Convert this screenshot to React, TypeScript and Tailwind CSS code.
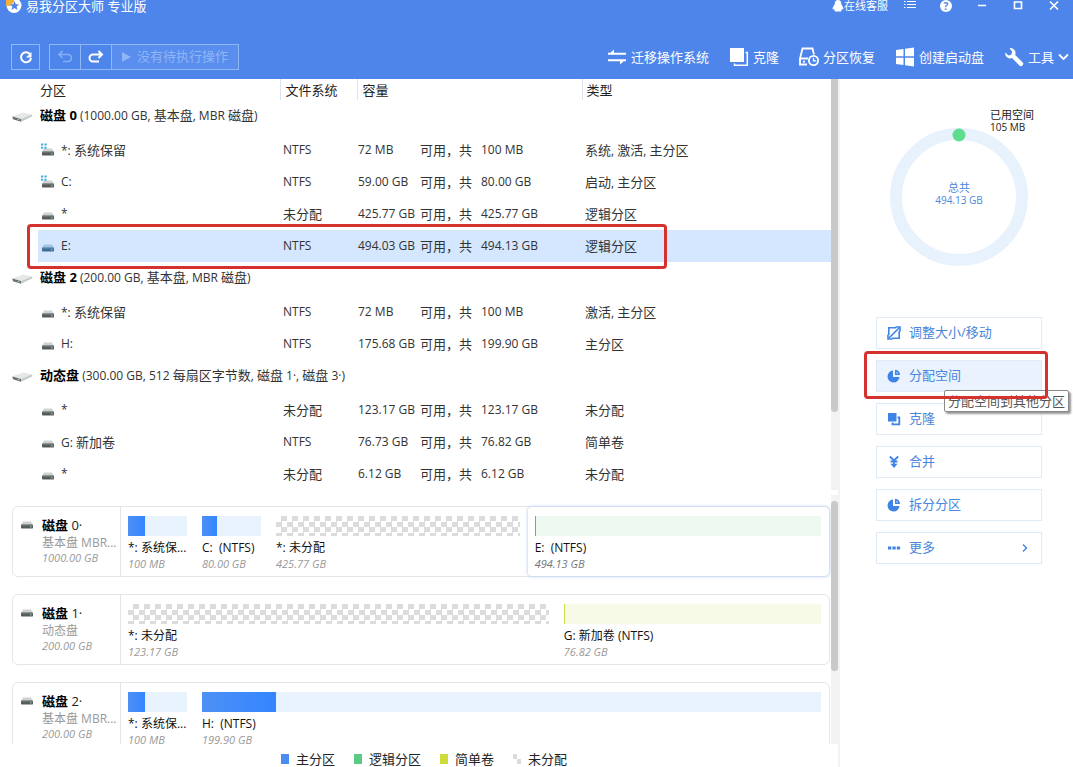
import { Fragment, type ReactNode } from "react";
import clsx from "clsx";

type Partition = {
  name: string;
  fs: string;
  free: string;
  total: string;
  type: string;
  system?: boolean;
  selected?: boolean;
};

type Group = { title: string; detail: string; partitions: Partition[] };

const GROUPS: Group[] = [
  {
    title: "磁盘 0",
    detail: "(1000.00 GB, 基本盘, MBR 磁盘)",
    partitions: [
      { name: "*: 系统保留", fs: "NTFS", free: "72 MB", total: "100 MB", type: "系统, 激活, 主分区", system: true },
      { name: "C:", fs: "NTFS", free: "59.00 GB", total: "80.00 GB", type: "启动, 主分区", system: true },
      { name: "*", fs: "未分配", free: "425.77 GB", total: "425.77 GB", type: "逻辑分区" },
      { name: "E:", fs: "NTFS", free: "494.03 GB", total: "494.13 GB", type: "逻辑分区", selected: true },
    ],
  },
  {
    title: "磁盘 2",
    detail: "(200.00 GB, 基本盘, MBR 磁盘)",
    partitions: [
      { name: "*: 系统保留", fs: "NTFS", free: "72 MB", total: "100 MB", type: "激活, 主分区" },
      { name: "H:", fs: "NTFS", free: "175.68 GB", total: "199.90 GB", type: "主分区" },
    ],
  },
  {
    title: "动态盘",
    detail: "(300.00 GB, 512 每扇区字节数, 磁盘 1·, 磁盘 3·)",
    partitions: [
      { name: "*", fs: "未分配", free: "123.17 GB", total: "123.17 GB", type: "未分配" },
      { name: "G: 新加卷", fs: "NTFS", free: "76.73 GB", total: "76.82 GB", type: "简单卷" },
      { name: "*", fs: "未分配", free: "6.12 GB", total: "6.12 GB", type: "未分配" },
    ],
  },
];

type Kind = "primary" | "logical" | "simple" | "free";

// grow 0 is a partition too small to scale, drawn at the minimum width
type Segment = { label: string; size: string; kind: Kind; grow: number; used: number; selected?: boolean };

const DISKS: { title: string; sub: string; size: string; segments: Segment[] }[] = [
  {
    title: "0·",
    sub: "基本盘 MBR...",
    size: "1000.00 GB",
    segments: [
      { label: "*: 系统保...", size: "100 MB", kind: "primary", grow: 0, used: 28 },
      { label: "C:  (NTFS)", size: "80.00 GB", kind: "primary", grow: 0, used: 26 },
      { label: "*: 未分配", size: "425.77 GB", kind: "free", grow: 245, used: 0 },
      { label: "E:  (NTFS)", size: "494.13 GB", kind: "logical", grow: 288, used: 0, selected: true },
    ],
  },
  {
    title: "1·",
    sub: "动态盘",
    size: "200.00 GB",
    segments: [
      { label: "*: 未分配", size: "123.17 GB", kind: "free", grow: 422, used: 0 },
      { label: "G: 新加卷 (NTFS)", size: "76.82 GB", kind: "simple", grow: 258, used: 0 },
    ],
  },
  {
    title: "2·",
    sub: "基本盘 MBR...",
    size: "200.00 GB",
    segments: [
      { label: "*: 系统保...", size: "100 MB", kind: "primary", grow: 0, used: 28 },
      { label: "H:  (NTFS)", size: "199.90 GB", kind: "primary", grow: 1, used: 12 },
    ],
  },
];

const TRACK: Record<Kind, string> = {
  primary: "bg-[#e8f3fd]",
  logical: "bg-[#edf9f1]",
  simple: "bg-[#f7fae6]",
  free: "bg-[conic-gradient(#dcdcdc_25%,#fff_0_50%,#dcdcdc_0_75%,#fff_0)] bg-[length:11px_11px]",
};

const FILL: Record<Kind, string> = {
  primary: "bg-gradient-to-r from-[#4d90f5] to-[#3385ff]",
  logical: "bg-[#5cba80]",
  simple: "bg-[#d0dc4a]",
  free: "",
};

const LEGEND = [
  { label: "主分区", color: "bg-[#4a8cf0]" },
  { label: "逻辑分区", color: "bg-[#5bcb83]" },
  { label: "简单卷", color: "bg-[#cddc39]" },
  { label: "未分配", color: "bg-[conic-gradient(#fff_25%,#dcdcdc_0_50%,#fff_0_75%,#dcdcdc_0)]" },
];

// Han characters are set one size above the Latin text around them
function Mixed({ text }: { text: string }) {
  return (
    <>
      {text.split(/([\u4e00-\u9fff]+)/).map((part, i) =>
        i % 2 ? <span key={i} className="text-[13px]">{part}</span> : <Fragment key={i}>{part}</Fragment>
      )}
    </>
  );
}

function DriveIcon({ system, selected }: { system?: boolean; selected?: boolean }) {
  return (
    <svg width="14" height="14" viewBox="0 0 14 14" className="shrink-0">
      <path d="M3 5.500h8l2 3.500H1z" fill={selected ? "#a3c6e6" : "#cfd2d2"} />
      <rect x="1" y="8.500" width="12" height="4" rx="0.8" fill={selected ? "#3f6d94" : "#565c5c"} />
      <path d="M1.500 9h11" stroke={selected ? "#6d9cc4" : "#8c9292"} strokeWidth="0.800" />
      <rect x="10" y="10.300" width="1.500" height="1" fill="#a9cdb5" />
      {system && <path d="M0 .5h2.200v2H0zM3.400.5h2.200v2H3.400zM0 3.700h2.200v2H0zM3.400 3.700h2.200v2H3.400z" fill="#3fb0dc" />}
    </svg>
  );
}

function DiskIcon() {
  return (
    <svg width="20" height="12" viewBox="0 0 20 12" className="ml-3">
      <path d="M0 5.500L11 1.500l9 2-11 4.500z" fill="#e6e8e8" />
      <path d="M.3 5.500L9 8v2.800L1 8.300z" fill="#6a6e6f" />
      <path d="M9 8l11-4.500v2L9 10.800z" fill="#c6c9c9" />
      <path d="M5.500 8.300l2 .6" stroke="#a6d8b4" />
    </svg>
  );
}

function PartitionTable() {
  return (
    <table className="w-full table-fixed border-collapse text-left text-xs text-[#333]">
      <colgroup>
        <col className="w-[38px]" />
        <col className="w-[242px]" />
        <col className="w-[77px]" />
        <col className="w-[225px]" />
        <col />
      </colgroup>
      <thead>
        <tr className="h-[21px] text-[13px] text-[#222]">
          <td />
          <th className="pt-px pl-[2px] leading-4 font-normal">分区</th>
          <th className="border-l border-[#dde3e8] pt-px pl-[5px] leading-4 font-normal">文件系统</th>
          <th className="border-l border-[#dde3e8] pt-px pl-[5px] leading-4 font-normal">容量</th>
          <th className="border-l border-[#dde3e8] pt-px pl-1 leading-4 font-normal">类型</th>
        </tr>
      </thead>
      {GROUPS.map((group) => (
        <tbody key={group.title}>
          <tr className="h-[34px]">
            <td className="p-0"><DiskIcon /></td>
            <th colSpan={4} className="p-0 pb-[3px] pl-[2px] leading-5 font-normal">
              <b className="text-[13px] text-black">{group.title}</b> <Mixed text={group.detail} />
            </th>
          </tr>
          {group.partitions.map((p, i) => (
            <tr key={i} className="relative h-8">
              <td className="p-0">
                {p.selected && (
                  <span className="pointer-events-none absolute -top-[6px] right-[164px] -bottom-[7px] left-[27px] rounded-sm border-3 border-[#d5322f]" />
                )}
              </td>
              <td className={clsx("p-0 pl-[3px]", p.selected && "bg-[#d5e7fe]")}>
                <div className="flex items-center gap-[6px] leading-5">
                  <DriveIcon system={p.system} selected={p.selected} />
                  <span><Mixed text={p.name} /></span>
                </div>
              </td>
              <td className={clsx("p-0 pl-[3px] leading-5", p.selected && "bg-[#d5e7fe]")}><Mixed text={p.fs} /></td>
              <td className={clsx("p-0 pl-px", p.selected && "bg-[#d5e7fe]")}>
                <div className="flex leading-5 whitespace-nowrap">
                  <span className="w-[62px]">{p.free}</span>
                  <span className="w-[61px] text-[13px]">可用，共</span>
                  <span>{p.total}</span>
                </div>
              </td>
              <td className={clsx("p-0 pl-[3px] leading-5", p.selected && "bg-[#d5e7fe]")}><Mixed text={p.type} /></td>
            </tr>
          ))}
        </tbody>
      ))}
    </table>
  );
}

function SegmentBox({ seg }: { seg: Segment }) {
  return (
    <div
      className={clsx(
        "min-w-0 pt-[9px] pr-2 pl-[7px]",
        seg.grow ? "basis-0" : "w-[74px] shrink-0",
        seg.selected && "rounded-sm shadow-[0_0_3px_1px_#c9d9f5]"
      )}
      style={{ flexGrow: seg.grow }}
    >
      <div className={clsx("flex h-5", TRACK[seg.kind])}>
        {seg.kind !== "free" && <div className={clsx("min-w-px", FILL[seg.kind])} style={{ width: `${seg.used}%` }} />}
      </div>
      <p className="mt-1 text-xs leading-4 whitespace-pre text-[#111]">{seg.label}</p>
      <p className={clsx("text-[11px] leading-4 italic", seg.selected ? "text-[#777]" : "text-[#999]")}>{seg.size}</p>
    </div>
  );
}

function DiskMap() {
  return (
    <div className="flex min-w-0 flex-1 flex-col gap-[17px] overflow-hidden pt-[11px] pr-px pl-3">
      {DISKS.map((disk) => (
        <section key={disk.title} className="flex h-[71px] shrink-0 rounded-md border border-[#e1e6e9]">
          <div className="flex w-[108px] shrink-0 gap-2 border-r border-[#e1e6e9] pt-[9px] pl-[7px]">
            <DriveIcon />
            <div className="whitespace-nowrap">
              <h3 className="text-[13px] leading-[19px] text-[#222]"><b className="text-black">磁盘</b> {disk.title}</h3>
              <p className="text-xs leading-[15px] text-[#999]">{disk.sub}</p>
              <p className="text-[11px] leading-[15px] text-[#999] italic">{disk.size}</p>
            </div>
          </div>
          {disk.segments.map((seg) => <SegmentBox key={seg.label} seg={seg} />)}
        </section>
      ))}
    </div>
  );
}

const pie = (
  <svg width="14" height="14" viewBox="0 0 14 14" fill="#3f83e6">
    <path d="M6 1.500V8h6.500A6 6 0 1 1 6 1.500z" />
    <path d="M8 .8A5.500 5.500 0 0 1 13 6H8zm1.500 2V4.500h1.500A3 3 0 0 0 9.500 2.800z" fillRule="evenodd" />
  </svg>
);

const ACTIONS: { label: string; icon: ReactNode; active?: boolean; more?: boolean }[] = [
  {
    label: "调整大小/移动",
    icon: (
      <svg width="14" height="14" viewBox="0 0 14 14" fill="none" stroke="#3f83e6" strokeWidth="1.600">
        <path d="M9 1.800H1.800V9M5 12.200h7.200V5M2 12L12 2" />
        <path d="M8.500 1H13v4.500M5.500 13H1V8.500" />
      </svg>
    ),
  },
  { label: "分配空间", icon: pie, active: true },
  {
    label: "克隆",
    icon: (
      <svg width="14" height="14" viewBox="0 0 14 14">
        <path d="M1 1h8.500v8.500H1z" fill="#3f83e6" />
        <path d="M10.500 5.500h1.800v6.800H5.500v-1.800" fill="none" stroke="#3f83e6" strokeWidth="1.800" />
      </svg>
    ),
  },
  {
    label: "合并",
    icon: (
      <svg width="14" height="14" viewBox="0 0 14 14" fill="none" stroke="#3f83e6" strokeWidth="1.800">
        <path d="M2.800 1.500L7 5.500l4.200-4M7 5.500V12M3.500 6.500h7" />
        <path d="M3.500 8.800h7L7 13z" fill="#3f83e6" stroke="none" />
      </svg>
    ),
  },
  { label: "拆分分区", icon: pie },
  {
    label: "更多",
    more: true,
    icon: (
      <svg width="14" height="14" viewBox="0 0 14 14" fill="#3f83e6">
        <path d="M1 5.500h3.300v3H1zM5.400 5.500h3.300v3H5.400zM9.800 5.500h3.300v3H9.800z" />
      </svg>
    ),
  },
];

function Sidebar() {
  return (
    <aside className="w-[235px] shrink-0 border-l-2 border-[#f1f3f5] pt-[49px] pr-[31px] pl-9">
      <div className="relative mx-auto flex size-[138px] flex-col items-center justify-center pb-[7px] text-[#4a86dc]">
        <svg viewBox="0 0 138 138" className="absolute inset-0">
          <circle cx="69" cy="69" r="63" fill="none" stroke="#e8f2fc" strokeWidth="12" />
          <circle cx="69" cy="7" r="6.500" fill="#5fdd8f" />
        </svg>
        <span className="text-[11px] leading-[13px]">总共</span>
        <span className="text-[10px] leading-[13px]">494.13 GB</span>
        <div className="absolute -top-5 left-[100px] whitespace-nowrap text-[#222]">
          <p className="text-[11px] leading-[13px]">已用空间</p>
          <p className="text-[10px] leading-[13px]">105 MB</p>
        </div>
      </div>
      <div className="mt-[51px] flex flex-col gap-[11px]">
        {ACTIONS.map((a) => (
          <div key={a.label} className="relative">
            <button
              className={clsx(
                "flex h-8 w-full items-center gap-2 border border-[#e0ebf6] pl-[10px] text-[13px] text-[#4a86dc]",
                a.active && "bg-[#eaf2fd]"
              )}
            >
              {a.icon}
              {a.label}
              {a.more && (
                <svg width="8" height="10" viewBox="0 0 8 10" fill="none" stroke="#4a86dc" strokeWidth="1.500" className="mr-3 ml-auto">
                  <path d="M2 1.500L5.500 5 2 8.500" />
                </svg>
              )}
            </button>
            {a.active && (
              <>
                <div role="tooltip" className="absolute top-[30px] -right-[27px] z-10 rounded-xs border border-[#8a8a8a] bg-white px-[3px] text-[13px] leading-5 whitespace-nowrap text-[#555] shadow-[2px_2px_2px_#999]">
                  分配空间到其他分区
                </div>
                <span className="pointer-events-none absolute -top-[9px] -right-[6px] -bottom-[7px] -left-[12px] z-20 rounded-sm border-3 border-[#d5322f]" />
              </>
            )}
          </div>
        ))}
      </div>
    </aside>
  );
}

const TOOLS: { label: string; icon: ReactNode; menu?: boolean }[] = [
  {
    label: "迁移操作系统",
    icon: (
      <g fill="#fff">
        <path d="M1 5.800h18v1.900H1zM1 7.700L7 2.500v4z" />
        <path d="M1 12.300h18v1.900H1zM19 12.300L13 17.500v-4z" />
      </g>
    ),
  },
  {
    label: "克隆",
    icon: (
      <>
        <path d="M1 1h14v14H1z" fill="#fff" />
        <path d="M16.500 5.500H18.300v12.800H5.500V16.500" fill="none" stroke="#fff" strokeWidth="1.500" />
      </>
    ),
  },
  {
    label: "分区恢复",
    icon: (
      <g fill="none" stroke="#fff" strokeWidth="1.800">
        <path d="M15 7.500L13.500 1.500H3.500L1 11.500v6h7M1 11.500h8" />
        <circle cx="14.500" cy="13.500" r="4.600" />
        <path d="M14.500 10.800v3h2.700" strokeWidth="1.300" />
        <path d="M4 14.600h2" />
      </g>
    ),
  },
  {
    label: "创建启动盘",
    icon: <path d="M1 3L8.500 1.900v7.400H1zM10 1.700L19 .5v8.800h-9zM1 10.700h7.500v7.400L1 17zM10 10.700h9v8.800L10 18.300z" fill="#fff" />,
  },
  {
    label: "工具",
    menu: true,
    icon: (
      <path
        d="M5.500 1.200a5 5 0 0 1 5.700 6.700l7.300 7.300a2.200 2.200 0 0 1-3.200 3.200L8 11.100A5 5 0 0 1 1.300 5.500L4.500 8.500 7.300 7.700 8.200 4.700z"
        fill="#fff"
      />
    ),
  },
];

function Header() {
  return (
    <header className="h-[79px] shrink-0 bg-[#4e85ea] text-white">
      <div className="flex h-3 items-center justify-between pr-[13px] pl-[6px]">
        <div className="flex items-center gap-1">
          <svg width="16" height="16" viewBox="0 0 16 16">
            <circle cx="8" cy="7.500" r="7.500" fill="#fff" />
            <path d="M0 0h8v4L4 8H0z" fill="#f3b23c" />
            <path d="M8.500 3l1.300 3.200 3.400.2-2.600 2.200.8 3.300-2.900-1.800-2.900 1.800.8-3.300-2.600-2.200 3.400-.2z" fill="#4e85ea" />
          </svg>
          <h1 className="text-[13px] leading-3">易我分区大师 专业版</h1>
        </div>
        <div className="flex items-center">
          <button className="mr-4 flex items-center text-[11px] leading-3">
            <svg width="12" height="12" viewBox="0 0 12 12" fill="#fff">
              <path d="M6 0a3.200 3.200 0 0 1 3.200 3.500c0 1.500 2.300 3.500 2.300 5.500 0 .8-1 .3-1.500 0L9 11.500H3L2 9c-.5.300-1.500.8-1.500 0 0-2 2.300-4 2.300-5.500A3.200 3.200 0 0 1 6 0z" />
            </svg>
            在线客服
          </button>
          <div className="flex items-center gap-6">
            <button aria-label="菜单">
              <svg width="12" height="12" viewBox="0 0 12 12" stroke="#fff">
                <path d="M0 1.500h1.500M3 1.500h9M0 4.500h1.500M3 4.500h9M0 7.500h1.500M3 7.500h9" strokeWidth="1.200" />
              </svg>
            </button>
            <button aria-label="帮助" className="size-3 rounded-full bg-white text-[10px] leading-3 font-bold text-[#4e85ea]">?</button>
            <button aria-label="最小化">
              <svg width="12" height="12" viewBox="0 0 12 12" stroke="#fff" strokeWidth="1.500"><path d="M2 5.500h8" /></svg>
            </button>
            <button aria-label="最大化">
              <svg width="12" height="12" viewBox="0 0 12 12" fill="none" stroke="#fff" strokeWidth="1.600"><path d="M2.500 2h7v6.500h-7z" /></svg>
            </button>
            <button aria-label="关闭">
              <svg width="12" height="12" viewBox="0 0 12 12" stroke="#fff" strokeWidth="1.600"><path d="M2 1.500l8 8M10 1.500l-8 8" /></svg>
            </button>
          </div>
        </div>
      </div>

      <div className="mt-8 flex h-[26px] items-center justify-between pr-1 pl-[11px]">
        <div className="flex h-full gap-[9px]">
          <button aria-label="刷新" className="flex w-[29px] items-center justify-center border border-[#8fb8f8]">
            <svg width="14" height="14" viewBox="0 0 14 14" fill="none" stroke="#fff" strokeWidth="2">
              <path d="M11 4.200A5 5 0 1 0 12 8" />
              <path d="M12.500 2v5.500H7z" fill="#fff" stroke="none" />
            </svg>
          </button>
          <div className="flex divide-x divide-[#8fb8f8] border border-[#8fb8f8]">
            <button aria-label="撤销" className="flex w-[31px] items-center justify-center text-[#86aff5]">
              <svg width="16" height="14" viewBox="0 0 16 14" fill="none" stroke="currentColor" strokeWidth="1.600">
                <path d="M5.500 1L2 4.500 5.500 8M2 4.500h9a3.500 3.500 0 0 1 0 7H6" />
              </svg>
            </button>
            <button aria-label="重做" className="flex w-[31px] items-center justify-center">
              <svg width="16" height="14" viewBox="0 0 16 14" fill="none" stroke="currentColor" strokeWidth="2">
                <path d="M10.500 1L14 4.500 10.500 8M14 4.500H5a3.500 3.500 0 0 0 0 7h6" />
              </svg>
            </button>
            <button className="flex items-center gap-[6px] bg-[#5a8eee] px-[10px] text-[13px] text-[#8fb5f7]">
              <svg width="9" height="10" viewBox="0 0 9 10" fill="currentColor"><path d="M0 0l9 5-9 5z" /></svg>
              没有待执行操作
            </button>
          </div>
        </div>
        <nav className="flex items-center gap-5">
          {TOOLS.map((t) => (
            <button key={t.label} className="flex items-center gap-1 text-[13px] leading-5 whitespace-nowrap">
              <svg width="20" height="20" viewBox="0 0 20 20">{t.icon}</svg>
              {t.label}
              {t.menu && (
                <svg width="11" height="8" viewBox="0 0 11 8" fill="none" stroke="#fff" strokeWidth="1.800">
                  <path d="M1 1.500L5.500 6 10 1.500" />
                </svg>
              )}
            </button>
          ))}
        </nav>
      </div>
    </header>
  );
}

export default function App() {
  return (
    <div className="flex h-screen flex-col overflow-hidden bg-white font-['Open_Sans','Noto_Sans_CJK_SC',sans-serif]">
      <Header />
      <div className="flex min-h-0 flex-1">
        <main className="flex min-w-0 flex-1 flex-col">
          <div className="flex shrink-0">
            <div className="min-w-0 flex-1"><PartitionTable /></div>
            <div className="w-[7px] shrink-0 bg-[#f3f3f3]">
              <div className="h-[81%] rounded-b-sm bg-[#c9c9c9]" />
            </div>
          </div>
          <div className="mt-[5px] flex min-h-0 flex-1">
            <DiskMap />
            <div className="w-[7px] shrink-0 bg-[#f3f3f3] pt-[6px]">
              <div className="h-[70%] rounded-sm bg-[#c9c9c9]" />
            </div>
          </div>
          <footer className="flex h-[23px] shrink-0 justify-center gap-[19px] overflow-hidden pt-[7px] pl-[10px]">
            {LEGEND.map((l) => (
              <span key={l.label} className="flex h-4 items-center gap-[7px] text-[13px] leading-4 text-[#222]">
                <i className={clsx("h-[10px] w-2", l.color)} />
                {l.label}
              </span>
            ))}
          </footer>
        </main>
        <Sidebar />
      </div>
    </div>
  );
}
